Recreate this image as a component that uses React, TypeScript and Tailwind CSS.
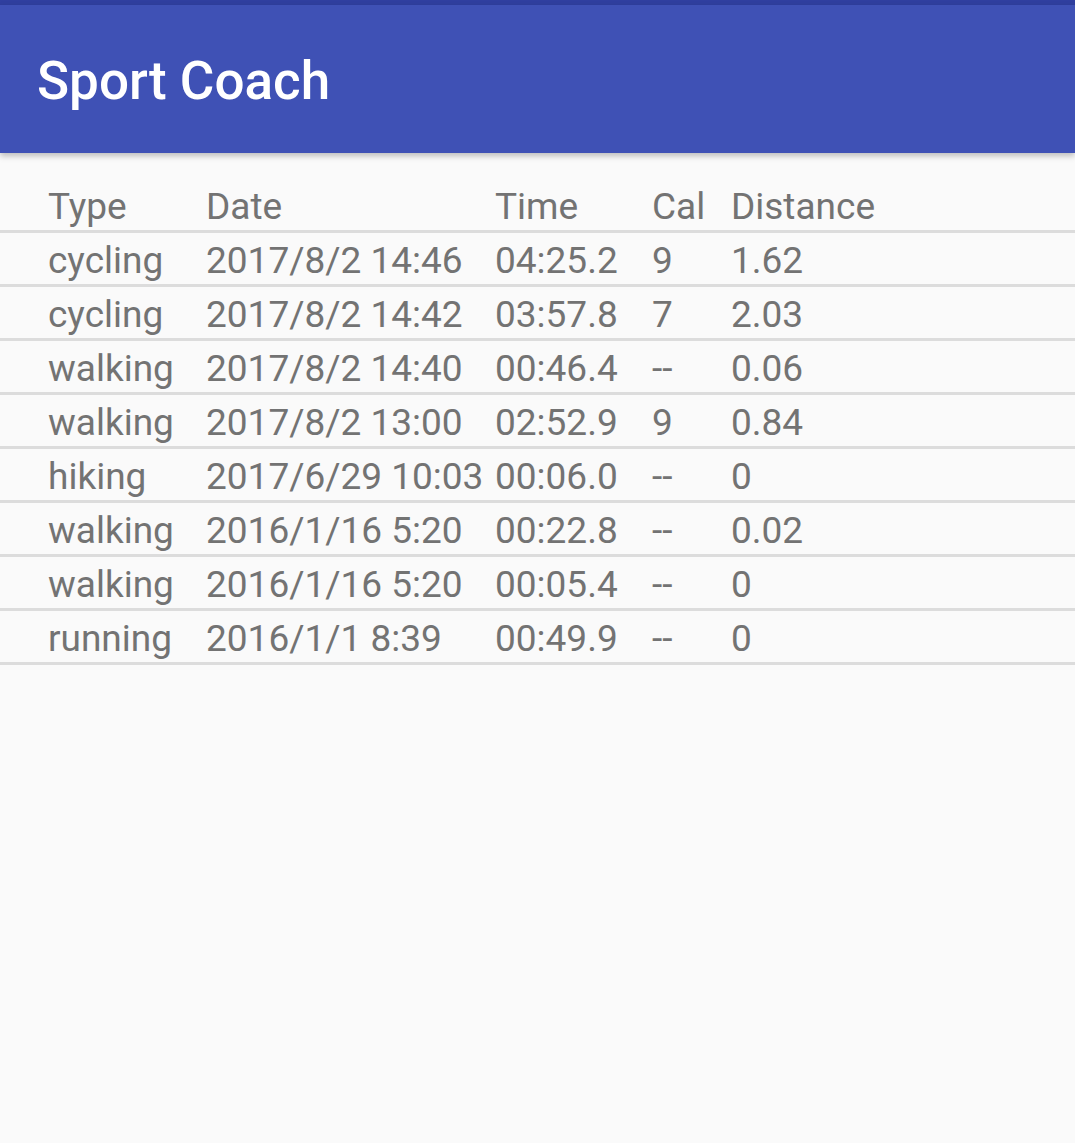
type Activity = {
  type: string;
  date: string;
  time: string;
  cal: string;
  distance: string;
};

const activities: Activity[] = [
  { type: 'cycling', date: '2017/8/2 14:46', time: '04:25.2', cal: '9', distance: '1.62' },
  { type: 'cycling', date: '2017/8/2 14:42', time: '03:57.8', cal: '7', distance: '2.03' },
  { type: 'walking', date: '2017/8/2 14:40', time: '00:46.4', cal: '--', distance: '0.06' },
  { type: 'walking', date: '2017/8/2 13:00', time: '02:52.9', cal: '9', distance: '0.84' },
  { type: 'hiking', date: '2017/6/29 10:03', time: '00:06.0', cal: '--', distance: '0' },
  { type: 'walking', date: '2016/1/16 5:20', time: '00:22.8', cal: '--', distance: '0.02' },
  { type: 'walking', date: '2016/1/16 5:20', time: '00:05.4', cal: '--', distance: '0' },
  { type: 'running', date: '2016/1/1 8:39', time: '00:49.9', cal: '--', distance: '0' },
];

function Cells({ row }: { row: Activity }) {
  return (
    <>
      <span className="w-[158px] shrink-0 whitespace-nowrap">{row.type}</span>
      <span className="w-[289px] shrink-0 whitespace-nowrap">{row.date}</span>
      <span className="w-[157px] shrink-0 whitespace-nowrap">{row.time}</span>
      <span className="w-[79px] shrink-0 whitespace-nowrap">{row.cal}</span>
      <span className="whitespace-nowrap">{row.distance}</span>
    </>
  );
}

export default function App() {
  return (
    <main className="min-h-[1143px] w-full bg-[#fafafa] font-['Roboto',sans-serif]">
      <div className="h-[5px] bg-[#303f9f]" />
      <header className="relative z-10 flex h-[148px] items-center bg-[#3f51b5] pl-[37px] pt-[5px] shadow-[0_3px_6px_rgba(0,0,0,0.25)]">
        <h1 className="text-[53px] font-medium leading-none text-white">Sport Coach</h1>
      </header>

      <div className="text-[37px] text-[#737373]">
        <div className="flex h-[77px] items-center pl-[48px] pt-[31px] leading-[46px]">
          <Cells row={{ type: 'Type', date: 'Date', time: 'Time', cal: 'Cal', distance: 'Distance' }} />
        </div>
        <div className="h-[3px] bg-[#dcdcdc]" />
        {activities.map((row, idx) => (
          <div key={idx}>
            <div className="flex h-[51px] items-center pl-[48px] pt-[4px] leading-[47px]">
              <Cells row={row} />
            </div>
            <div className="h-[3px] bg-[#dcdcdc]" />
          </div>
        ))}
      </div>
    </main>
  );
}
